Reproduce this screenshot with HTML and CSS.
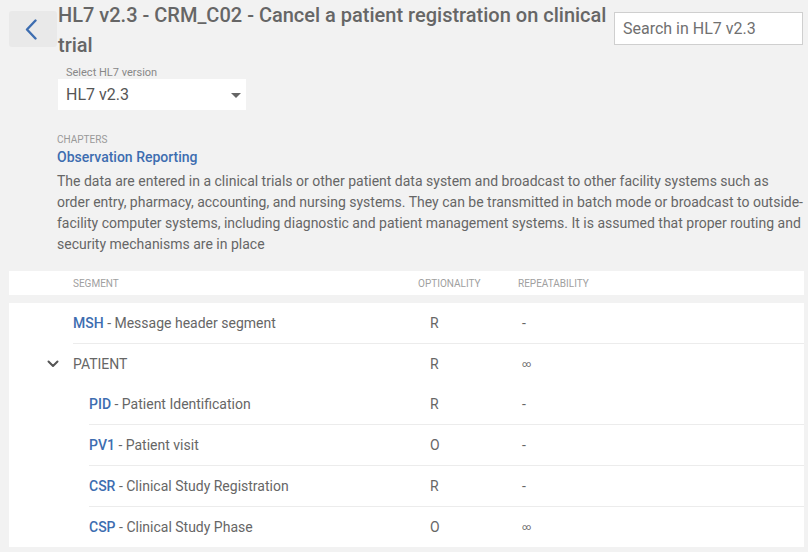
FILE: index.html
```html
<!DOCTYPE html>
<html lang="en">
<head>
<meta charset="utf-8">
<title>HL7 v2.3 - CRM_C02</title>
<link rel="stylesheet" href="styles.css">
</head>
<body>
<header class="top">
  <button class="back" aria-label="Back">
    <svg width="12" height="21" viewBox="0 0 12 21"><polyline points="10.5,1.5 2,10.5 10.5,19.5" fill="none" stroke="#3d6db0" stroke-width="2.4" stroke-linecap="round" stroke-linejoin="round"/></svg>
  </button>
  <h1 class="title">HL7 v2.3 - CRM_C02 - Cancel a patient registration on clinical trial</h1>
  <div class="search"><input class="search-input" type="text" placeholder="Search in HL7 v2.3"></div>
</header>

<section class="version">
  <div class="version-label">Select HL7 version</div>
  <div class="select">
    <span>HL7 v2.3</span>
    <span class="caret"></span>
  </div>
</section>

<section class="chapter">
  <div class="chapter-label">CHAPTERS</div>
  <div class="chapter-name">Observation Reporting</div>
  <p class="chapter-desc">The data are entered in a clinical trials or other patient data system and broadcast to other facility systems such as order entry, pharmacy, accounting, and nursing systems. They can be transmitted in batch mode or broadcast to outside-facility computer systems, including diagnostic and patient management systems. It is assumed that proper routing and security mechanisms are in place</p>
</section>

<div class="thead">
  <div class="th th-name">SEGMENT</div>
  <div class="th th-opt">OPTIONALITY</div>
  <div class="th th-rep">REPEATABILITY</div>
</div>

<div class="tbody">
  <div class="row">
    <div class="gutter"></div>
    <div class="cells line">
      <div class="name"><b class="code">MSH</b> - Message header segment</div>
      <div class="opt">R</div>
      <div class="rep">-</div>
    </div>
  </div>
  <div class="row">
    <div class="gutter gutter-group">
      <svg width="12" height="8" viewBox="0 0 12 8"><polyline points="1.5,1.5 6,6 10.5,1.5" fill="none" stroke="#555" stroke-width="2" stroke-linecap="round" stroke-linejoin="round"/></svg>
    </div>
    <div class="cells">
      <div class="name group">PATIENT</div>
      <div class="opt">R</div>
      <div class="rep inf">∞</div>
    </div>
  </div>
  <div class="row">
    <div class="gutter gutter-child"></div>
    <div class="cells line">
      <div class="name"><b class="code">PID</b> - Patient Identification</div>
      <div class="opt">R</div>
      <div class="rep">-</div>
    </div>
  </div>
  <div class="row">
    <div class="gutter gutter-child"></div>
    <div class="cells line">
      <div class="name"><b class="code">PV1</b> - Patient visit</div>
      <div class="opt">O</div>
      <div class="rep">-</div>
    </div>
  </div>
  <div class="row">
    <div class="gutter gutter-child"></div>
    <div class="cells line">
      <div class="name"><b class="code">CSR</b> - Clinical Study Registration</div>
      <div class="opt">R</div>
      <div class="rep">-</div>
    </div>
  </div>
  <div class="row">
    <div class="gutter gutter-child"></div>
    <div class="cells">
      <div class="name"><b class="code">CSP</b> - Clinical Study Phase</div>
      <div class="opt">O</div>
      <div class="rep inf">∞</div>
    </div>
  </div>
</div>
</body>
</html>
```

FILE: styles.css
```css
* { box-sizing: border-box; }

html, body {
  margin: 0;
  padding: 0;
  background: #f2f2f2;
  font-family: Roboto, "Liberation Sans", Arial, sans-serif;
  color: #666;
}

.top {
  display: flex;
  align-items: flex-start;
  padding: 0 5px 0 9px;
}

.back {
  flex: none;
  margin: 11px 1px 0 0;
  width: 48px;
  height: 36px;
  border: 0;
  border-radius: 3px;
  background: #e9e9e9;
  display: flex;
  align-items: center;
  justify-content: center;
  padding: 0 4px 0 0;
}

.title {
  flex: 1;
  margin: 0;
  font-size: 20px;
  line-height: 30px;
  font-weight: 500;
  color: #666;
  padding-right: 6px;
}

.search {
  flex: none;
  margin-top: 12px;
  width: 189px;
  height: 33px;
}

.search-input {
  width: 100%;
  height: 100%;
  border: 1px solid #cfcfcf;
  background: #fff;
  padding: 0 8px;
  font-family: Roboto, "Liberation Sans", Arial, sans-serif;
  font-size: 16px;
  color: #666;
  outline: none;
}

.search-input::placeholder { color: #707070; }

.version {
  margin: 6px 0 0 58px;
  width: 188px;
}

.version-label {
  font-size: 11px;
  line-height: 13px;
  color: #888;
  padding-left: 8px;
}

.select {
  height: 31px;
  background: #fff;
  display: flex;
  align-items: center;
  justify-content: space-between;
  padding: 0 5px 0 8px;
  font-size: 16px;
  line-height: 31px;
  color: #555;
}

.caret {
  width: 0;
  height: 0;
  border-left: 5px solid transparent;
  border-right: 5px solid transparent;
  border-top: 5px solid #666;
  margin-top: 1px;
}

.chapter {
  margin: 23px 4.5px 0 57px;
}

.chapter-label {
  font-size: 10px;
  line-height: 14px;
  color: #999;
}

.chapter-name {
  font-size: 14px;
  line-height: 20px;
  font-weight: 500;
  color: #3d6db0;
}

.chapter-desc {
  margin: 4px 0 0;
  font-size: 14px;
  line-height: 21px;
  color: #666;
}

.thead {
  margin: 16px 4px 0 9px;
  height: 24px;
  background: #fff;
  display: flex;
  align-items: center;
  padding-left: 64px;
  font-size: 10px;
  color: #a0a0a0;
}

.th-name { flex: 1; }
.th-opt { width: 100px; }
.th-rep { width: 286px; }

.tbody {
  margin: 8px 4px 0 9px;
  background: #fff;
}

.row {
  display: flex;
}

.gutter {
  flex: none;
  width: 64px;
}

.gutter-group {
  display: flex;
  align-items: center;
  justify-content: flex-end;
  padding-right: 14px;
}

.gutter-child { width: 80px; }

.cells {
  flex: 1;
  display: flex;
  height: 40px;
  align-items: center;
  font-size: 14px;
  line-height: 40px;
}

.cells.line {
  height: 41px;
  border-bottom: 1px solid #ececec;
}

.name {
  flex: 1;
  color: #666;
}

.code {
  font-weight: 500;
  color: #3d6db0;
}

.group { text-transform: uppercase; }

.opt {
  width: 92px;
  color: #666;
}

.rep {
  width: 282px;
  color: #666;
}

.inf {
  font-size: 9px;
}
```
